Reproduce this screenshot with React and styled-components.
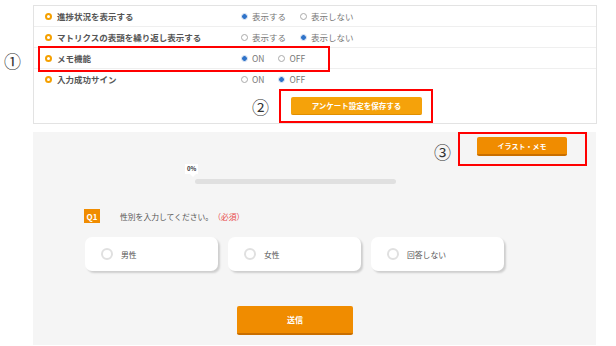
import React from 'react';
import styled, { createGlobalStyle } from 'styled-components';

const GlobalStyle = createGlobalStyle`
    body {
        margin: 0;
        background: #fff;
        font-family: "Noto Sans CJK JP", "Noto Sans", sans-serif;
    }
`
const Page = styled.div`
    position: relative;
    width: 616px;
    height: 346px;
    overflow: hidden;
`
const SettingsPanel = styled.div`
    margin: 5px 0 0 33px;
    width: 562px;
    border: 1px solid #e3e3e3;
`
const SettingRow = styled.div`
    display: flex;
    align-items: center;
    height: 20px;
    border-bottom: ${props => props.last ? 'none' : '1px solid #efefef'};
`
const Label = styled.div`
    width: 196px;
    padding-left: 11px;
    display: flex;
    align-items: center;
    gap: 5px;
    font-size: 8.5px;
    font-weight: 700;
    color: #555;
`
const Ring = styled.span`
    flex-shrink: 0;
    box-sizing: border-box;
    width: 7px;
    height: 7px;
    border-radius: 50%;
    border: 2px solid #f5a000;
`
const RadioGroup = styled.div`
    display: flex;
    align-items: center;
    gap: 14px;
`
const RadioOption = styled.div`
    display: flex;
    align-items: center;
    gap: 4px;
    font-size: 8.5px;
    color: #777;
`
const Dot = styled.span`
    flex-shrink: 0;
    box-sizing: border-box;
    width: 7px;
    height: 7px;
    border-radius: 50%;
    border: 1px solid ${props => props.checked ? '#c9d8ee' : '#aaa'};
    background: ${props => props.checked ? 'radial-gradient(circle, #2f73c9 0 2.2px, #fff 2.6px)' : '#fff'};
`
const SaveRow = styled.div`
    display: flex;
    padding: 8px 0 8px 257px;
`
const SaveButton = styled.button`
    width: 131px;
    height: 18px;
    border: none;
    border-radius: 2px;
    background: #f5a20a;
    border-bottom: 1px solid #e08f00;
    color: #fff;
    font-family: inherit;
    font-size: 7.5px;
    font-weight: 700;
    padding: 0;
`
const Survey = styled.div`
    margin: 8px 0 0 33px;
    width: 563px;
    height: 213px;
    background: #f5f5f5;
    display: flex;
    flex-direction: column;
`
const TopBar = styled.div`
    display: flex;
    justify-content: flex-end;
    padding: 5px 29px 0 0;
`
const MemoButton = styled.button`
    width: 90px;
    height: 19px;
    border: none;
    border-radius: 2px;
    background: #f08c00;
    border-bottom: 2px solid #c96f00;
    color: #fff;
    font-family: inherit;
    font-size: 7px;
    font-weight: 700;
    padding: 0;
`
const Progress = styled.div`
    margin: 8px 0 0 152px;
    display: flex;
    flex-direction: column;
    align-items: flex-start;
`
const Percent = styled.span`
    position: relative;
    background: #fff;
    font-size: 6px;
    font-weight: 700;
    color: #333;
    padding: 2px 2px;
    line-height: 6px;
    &::after {
        content: '';
        position: absolute;
        left: 5px;
        bottom: -3px;
        border-left: 3px solid transparent;
        border-right: 3px solid transparent;
        border-top: 3px solid #fff;
    }
`
const Bar = styled.div`
    margin: 5px 0 0 10px;
    width: 201px;
    height: 5px;
    border-radius: 3px;
    background: #e0e0e0;
`
const Question = styled.div`
    margin: 25px 0 0 51px;
    display: flex;
    align-items: center;
    gap: 20px;
    font-size: 7.8px;
    color: #555;
`
const Badge = styled.span`
    width: 16px;
    height: 14px;
    background: #f08c00;
    color: #fff;
    font-size: 8px;
    font-weight: 700;
    display: flex;
    align-items: center;
    justify-content: center;
`
const Required = styled.span`
    color: #e84a4a;
    margin-left: 4px;
`
const Options = styled.div`
    margin: 14px 0 0 52px;
    display: flex;
    gap: 10px;
`
const Card = styled.div`
    width: 133px;
    height: 34px;
    background: #fff;
    border-radius: 7px;
    box-shadow: 2px 2px 2px rgba(0, 0, 0, 0.16);
    display: flex;
    align-items: center;
    gap: 8px;
    padding-left: 16px;
    box-sizing: border-box;
    font-size: 7.8px;
    color: #555;
`
const CardRadio = styled.span`
    flex-shrink: 0;
    box-sizing: border-box;
    width: 12px;
    height: 12px;
    border-radius: 50%;
    border: 2px solid #e0e0e0;
`
const SubmitRow = styled.div`
    display: flex;
    margin-top: 35px;
    padding-left: 204px;
`
const SubmitButton = styled.button`
    width: 116px;
    height: 29px;
    border: none;
    border-radius: 2px;
    background: #f08c00;
    border-bottom: 2px solid #c96f00;
    color: #fff;
    font-family: inherit;
    font-size: 8px;
    font-weight: 700;
    padding: 0;
`
const RedBox = styled.div`
    position: absolute;
    box-sizing: border-box;
    border: 2px solid #f00;
    left: ${props => props.x}px;
    top: ${props => props.y}px;
    width: ${props => props.w}px;
    height: ${props => props.h}px;
`
const Mark = styled.span`
    position: absolute;
    left: ${props => props.x}px;
    top: ${props => props.y}px;
    font-size: 17px;
    line-height: 17px;
    color: #333;
`

const settings = [
    { label: '進捗状況を表示する', options: ['表示する', '表示しない'], checked: 0 },
    { label: 'マトリクスの表頭を繰り返し表示する', options: ['表示する', '表示しない'], checked: 1 },
    { label: 'メモ機能', options: ['ON', 'OFF'], checked: 0 },
    { label: '入力成功サイン', options: ['ON', 'OFF'], checked: 1 },
]

const App = () => {
    return (
        <Page>
            <GlobalStyle />
            <SettingsPanel>
                {settings.map((s, i) => (
                    <SettingRow key={i} last={i === settings.length - 1}>
                        <Label><Ring />{s.label}</Label>
                        <RadioGroup>
                            {s.options.map((o, j) => (
                                <RadioOption key={j}>
                                    <Dot checked={j === s.checked} />{o}
                                </RadioOption>
                            ))}
                        </RadioGroup>
                    </SettingRow>
                ))}
                <SaveRow>
                    <SaveButton>アンケート設定を保存する</SaveButton>
                </SaveRow>
            </SettingsPanel>
            <Survey>
                <TopBar>
                    <MemoButton>イラスト・メモ</MemoButton>
                </TopBar>
                <Progress>
                    <Percent>0%</Percent>
                    <Bar />
                </Progress>
                <Question>
                    <Badge>Q1</Badge>
                    <span>性別を入力してください。<Required>（必須）</Required></span>
                </Question>
                <Options>
                    {['男性', '女性', '回答しない'].map(o => (
                        <Card key={o}><CardRadio />{o}</Card>
                    ))}
                </Options>
                <SubmitRow>
                    <SubmitButton>送信</SubmitButton>
                </SubmitRow>
            </Survey>
            <RedBox x={38} y={46} w={292} h={26} />
            <RedBox x={279} y={89} w={154} h={34} />
            <RedBox x={458} y={132} w={129} h={34} />
            <Mark x={4} y={52}>①</Mark>
            <Mark x={252} y={98}>②</Mark>
            <Mark x={434} y={143}>③</Mark>
        </Page>
    )
}

export default App;
